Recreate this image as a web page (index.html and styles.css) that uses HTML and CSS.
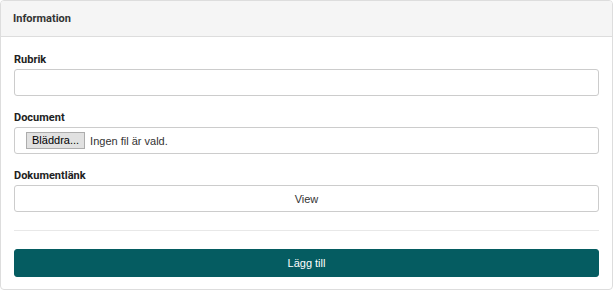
FILE: index.html
```html
<!DOCTYPE html>
<html lang="sv">
<head>
  <meta charset="UTF-8">
  <meta name="viewport" content="width=device-width, initial-scale=1.0">
  <title>Information</title>
  <link rel="stylesheet" href="styles.css">
</head>
<body>
  <div class="panel">
    <div class="panel-heading">Information</div>
    <form class="panel-body">
      <div class="form-group">
        <label for="rubrik">Rubrik</label>
        <input type="text" id="rubrik" class="form-control">
      </div>
      <div class="form-group">
        <label>Document</label>
        <div class="form-control file-control">
          <span class="browse">Bläddra...</span>
          <span class="file-name">Ingen fil är vald.</span>
        </div>
      </div>
      <div class="form-group">
        <label>Dokumentlänk</label>
        <button type="button" class="btn btn-default">View</button>
      </div>
      <hr>
      <button type="submit" class="btn btn-primary">Lägg till</button>
    </form>
  </div>
</body>
</html>
```

FILE: styles.css
```css
body {
  margin: 0;
  font-family: Roboto, "Liberation Sans", Arial, sans-serif;
  font-size: 11px;
  color: #333;
  background: #fff;
}
.panel {
  width: 613px;
  height: 290px;
  box-sizing: border-box;
  border: 1px solid #ddd;
  border-radius: 4px;
}
.panel-heading {
  height: 36px;
  box-sizing: border-box;
  padding: 0 12px;
  display: flex;
  align-items: center;
  background-color: #f5f5f5;
  border-bottom: 1px solid #ddd;
  border-radius: 3px 3px 0 0;
  font-weight: bold;
  color: #333;
}
.panel-body {
  padding: 16px 13px 0 13px;
  margin: 0;
}
.form-group {
  margin-bottom: 15px;
}
label {
  display: block;
  font-weight: bold;
  color: #222;
  height: 14px;
  line-height: 14px;
  margin-bottom: 2px;
}
.form-control {
  display: block;
  width: 100%;
  height: 27px;
  box-sizing: border-box;
  border: 1px solid #ccc;
  border-radius: 3px;
  background: #fff;
  font-family: inherit;
  font-size: 11px;
  margin: 0;
}
.file-control {
  display: flex;
  align-items: center;
  padding: 0 11px;
  font-family: "Liberation Sans", Arial, sans-serif;
}
.browse {
  display: inline-block;
  padding: 1px 5px;
  background: #e1e1e1;
  border: 1px solid #adadad;
  color: #000;
  margin-right: 5px;
  line-height: 13px;
}
.file-name {
  color: #333;
}
.btn {
  display: block;
  width: 100%;
  height: 27px;
  box-sizing: border-box;
  border-radius: 3px;
  font-family: "Liberation Sans", Arial, sans-serif;
  font-size: 11px;
  cursor: pointer;
}
.btn-default {
  background: #fff;
  border: 1px solid #ccc;
  color: #333;
}
.btn-primary {
  height: 28px;
  background: #055c61;
  border: 1px solid #055c61;
  color: #fff;
}
hr {
  border: 0;
  border-top: 1px solid #e8e8e8;
  margin: 18px 0 18px 0;
}
```
